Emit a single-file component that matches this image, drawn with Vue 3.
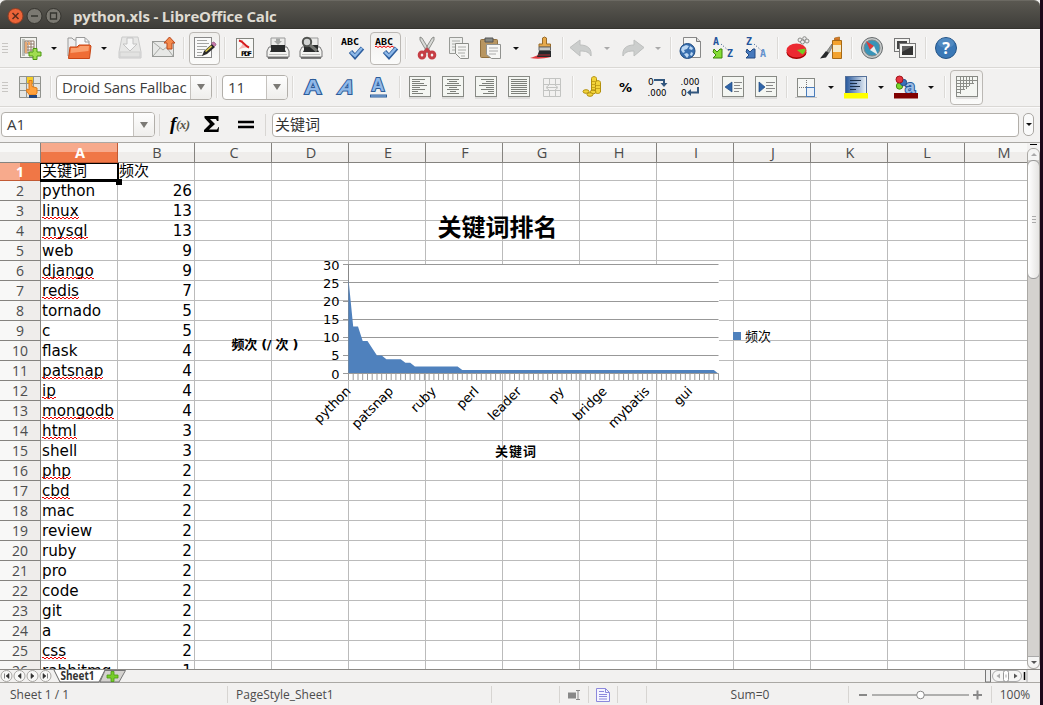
<script setup>
const sizes = { sep: 2, drop: 8, edit: 31, autospell: 31, gridview: 33, grip: 6, fontname: 156, fontsize: 66 }
const spread = (list) => {
  let right = 0
  return list.map(([name, centre]) => {
    const w = sizes[name] || 24
    const gap = centre - w / 2 - right
    right = centre + w / 2
    return { name, gap }
  })
}
const standard = spread([
  ['grip', 5], ['new', 30], ['drop', 54], ['open', 79], ['drop', 104], ['save', 130], ['mail', 164], ['sep', 184],
  ['edit', 204.5], ['sep', 225], ['pdf', 245], ['print', 278], ['preview', 311], ['sep', 332], ['spell', 352],
  ['autospell', 385.5], ['sep', 406], ['cut', 427], ['copy', 459], ['paste', 491], ['drop', 516], ['brush', 542],
  ['sep', 563], ['undo', 581], ['dropoff', 607], ['redo', 633], ['dropoff', 658], ['sep', 671], ['web', 690],
  ['sortaz', 724], ['sortza', 757], ['sep', 778], ['pie', 798], ['draw', 832], ['sep', 852], ['compass', 872],
  ['gallery', 905], ['sep', 926], ['help', 946]
])
const formatting = spread([
  ['grip', 5], ['styles', 30], ['sep', 51], ['fontname', 134], ['sep', 217], ['fontsize', 255], ['sep', 293],
  ['bold', 313], ['italic', 346], ['underline', 378], ['sep', 400], ['left', 420], ['center', 453], ['right', 486],
  ['justify', 519], ['merge', 552], ['sep', 573], ['coins', 593], ['percent', 625], ['decadd', 658], ['decdel', 691],
  ['sep', 713], ['outdent', 733], ['indent', 766], ['sep', 787], ['border', 806], ['drop', 831], ['hilite', 856],
  ['drop', 881], ['color', 906], ['drop', 931], ['sep', 945], ['gridview', 966.5]
])

const frame = '<rect x="1.500" y="1.500" width="21" height="20" fill="#f4f6f2" stroke="#888a85"/><path d="M1 23h22" stroke="#c9c9c7"/>'
const bars = (rows) => frame + `<g stroke="#7d807a" stroke-width="1">${rows.map(([a, b], i) => `<path d="M${a} ${4.5 + i * 2}H${b}"/>`).join('')}</g>`
const check = '<path d="M10.500 15.500l4.500 5 7.500-8.500" fill="none" stroke="#2d5e9e" stroke-width="4.600"/><path d="M10.800 16l4.200 3.800 7-7.800" fill="none" stroke="#8db8e8" stroke-width="2.400"/>'
const abc = '<text x="1" y="8.500" font-family="DejaVu Sans Mono" font-weight="bold" font-size="9" textLength="18" lengthAdjust="spacingAndGlyphs">ABC</text>'
const printer = '<path d="M5 2h14v10H5z" fill="#ececea" stroke="#999"/><path d="M3 11h18l2 4v6H1v-6z" fill="#f3f3f1" stroke="#777"/><path d="M5 9h14v5l1 2H4l1-2z" fill="#292b2b"/><path d="M3 18.500h18" stroke="#c1c1bf"/><path d="M2 22h20" stroke="#555" stroke-width="1.500"/>'
const letterA = (y, size, extra = '') => `<g ${extra}><text x="12" y="${y}" text-anchor="middle" font-family="Liberation Sans" font-weight="bold" font-size="${size}" fill="#8fb8e8" stroke="#2d5c98" stroke-width="2" paint-order="stroke">A</text></g>`
const arrowUndo = '<path d="M1 11.500L11 4v5c8 0 12 4 11 11-2-4-5-5-11-5v5z" fill="#cccecd" stroke="#bdbfbe"/>'
const smallArrow = (fill, edge) => `<path d="M2 13l3 3 3-3 2 0v9H1l3-3-3-3z" fill="${fill}" stroke="${edge}"/>`
const sorter = (a, b, shade, fill, edge) => `<g font-family="DejaVu Sans Mono" font-size="10" font-weight="bold"><text x="1" y="9" fill="#24549b">${a}</text><text x="15" y="21" fill="${shade}">${b}</text></g><path d="M9 8l8 7" stroke="#2e5286" stroke-dasharray="1 2"/>` + smallArrow(fill, edge)

const icons = {
  new: '<rect x="2.500" y="1.500" width="16" height="20" fill="#f3f3ef" stroke="#888a85"/><path d="M4 3h3v17H4z" fill="#bcbfb9"/><path d="M7 5h9v13H7z" fill="#fff"/><path d="M7 5h9M7 8h9M7 11h9M7 14h9M7 17h9M7 5v12M10 5v12M13 5v12M16 5v12" stroke="#8e7767" fill="none"/><path d="M7 6h2v11H7zM10 6h2v3h-2z" fill="#e8aa75"/><path d="M15 12.500h4v3.500h4v4h-4v3.500h-4V20h-4v-4h4z" fill="#a0dd50" stroke="#4b9810"/>',
  open: '<path d="M1 20V2h4l2 2h3v16z" fill="#eee" stroke="#999"/><path d="M9 12V1.500h9l4 4V12z" fill="#fafafa" stroke="#999"/><path d="M18 2v4h4" fill="none" stroke="#999"/><path d="M1.500 22.500L3 11h7l2-2h11l1 1-1.500 12.500z" fill="#ef6d35" stroke="#c84615"/><path d="M4 12h7l2-2h9l-.5 5L3.500 17z" fill="#ffb384" opacity=".7"/>',
  save: '<path d="M4 1h16l3 15v6H1v-6z" fill="#e7e7e6" stroke="#cacaca"/><path d="M2 16h20v5H2z" fill="#e2e2e1" stroke="#cfcfcf"/><path d="M9 2h6v6h4l-7 7-7-7h4z" fill="#f5f5f5" stroke="#c3c3c3"/>',
  mail: '<rect x=".5" y="5.500" width="21" height="15" fill="#e7e8e6" stroke="#989a97"/><path d="M1 6l10 8L21 6M1 20l7-8M21 20l-6-8" fill="none" stroke="#a7a9a5"/><path d="M15 13V7h-3l5.500-6L23 7h-3v6z" fill="#f48a4c" stroke="#b9461b"/>',
  edit: '<rect x="1.500" y="1.500" width="17" height="20" fill="#fafafa" stroke="#888"/><path d="M4 4.500h10M4 7.500h12M4 10.500h10M4 13.500h8M4 16.500h5M4 19.500h6" stroke="#a4a5a3"/><path d="M9 20l2-5 8-7 3 3-8 7z" fill="#292929"/><path d="M12 15l6-5.500 1.200 1.200-6.200 5.300z" fill="#dbc849"/><path d="M18.500 7.500l1.500-1.500h1l2 2v1l-1.500 1.500z" fill="#c678a8" stroke="#8c5478" stroke-width=".6"/>',
  pdf: '<rect x="3.500" y="2.500" width="17" height="19" fill="#f8f8f6" stroke="#83857f"/><path d="M5 4h5c0 4 3 6 8 8-5-1-10 0-13 2 4-4 5-6 4-9z" fill="#f3bab8"/><path d="M6 4.500c5 1 5 5 10 7" stroke="#d6191b" stroke-width="2" fill="none"/><text x="8" y="20" font-family="DejaVu Sans" font-weight="bold" font-size="6.500" textLength="11">PDF</text>',
  print: printer + '<path d="M10 2.500h4V5h2l-4 4-4-4h2z" fill="#a5a7a5"/>',
  preview: printer + '<circle cx="8" cy="6" r="4.200" fill="#d2d4d3" stroke="#50524f" stroke-width="2"/><path d="M11 9l7 6" stroke="#757773" stroke-width="3"/>',
  spell: abc + check,
  autospell: abc + '<path d="M1 11l1-1 2 1.500 2-1.500 2 1.500 2-1.500 2 1.500 2-1.500 2 1.500 2-1.500 2 1.500" fill="none" stroke="#e00"/>' + check,
  cut: '<path d="M5 1l2 1 8.500 14-3 1L5 4zM19 1l-2 1-8.500 14 3 1L19 4z" fill="#d8dad7" stroke="#777975" stroke-width=".8"/><g fill="none" stroke="#c63e45" stroke-width="3"><ellipse cx="7" cy="19" rx="2.800" ry="3"/><ellipse cx="17" cy="19" rx="2.800" ry="3"/><path d="M9 17l3-3.500 3 3.500"/></g>',
  copy: '<path d="M2.500 1.500h13v16h-13z" fill="#eeefed" stroke="#999b97"/><path d="M5 5h8M5 8h7M5 11h6M5 14h4" stroke="#aaaca8"/><path d="M8.500 7.500h13v15h-8l-5-5z" fill="#f5f5f3" stroke="#8b8d88"/><path d="M11 11h8M11 14h8M11 17h7M14 20h4" stroke="#aaaca8"/>',
  paste: '<rect x="1.500" y="3.500" width="17" height="18" rx="1" fill="#b89661" stroke="#90703f"/><path d="M6 2h8v4H6z" fill="#858985" stroke="#555"/><path d="M7.500 8.500h14v14h-9l-5-4z" fill="#f7f7f5" stroke="#91928f"/><path d="M10 12h9M10 15h9M10 18h7" stroke="#aaa"/>',
  brush: '<path d="M12.500 2q2-2 4 0v6h4v3H9V8h3.500z" fill="#e7aa4c" stroke="#996c2a"/><path d="M9 11h11.500v3.500H9z" fill="#c5c7c5" stroke="#666"/><path d="M0 22c4-1 5-2 9-3l12 2c-8 2-15 2-21 1z" fill="#e33b40"/><path d="M9 15h12v6H7z" fill="#26282b"/><path d="M8 19h12" stroke="#b82a30"/>',
  undo: arrowUndo,
  redo: `<g transform="matrix(-1 0 0 1 24 0)">${arrowUndo}</g>`,
  web: '<path d="M5.500 1.500h13l4 4v16h-17z" fill="#f6f6f4" stroke="#888"/><path d="M18.500 1.500v4h4" fill="#ddd" stroke="#777"/><circle cx="9.500" cy="15" r="7.500" fill="#386faf" stroke="#204c82"/><path d="M4 11l4-2 3 1-2 3-3 1 1 2-2 1-2-3zM12 10l3 2-1 2-3-1zM6 18l3-1 2 2-2 3zM13 16l2 1-1 3-2-1z" fill="#bdd8f3"/>',
  sortaz: sorter('A', 'Z', '#24549b', '#86dc35', '#3c850b'),
  sortza: sorter('Z', 'A', '#6492ce', '#4679bd', '#234b82'),
  pie: '<ellipse cx="10.500" cy="16.500" rx="10" ry="6.500" fill="#a40000"/><ellipse cx="10.500" cy="14.500" rx="10" ry="7" fill="#ec2931"/><path d="M11 14l8.500-1.500c0 3-1 4-3 6z" fill="#70cc20"/><g fill="#eee" stroke="#8a8b88"><circle cx="14" cy="4" r="2"/><circle cx="18.500" cy="2.500" r="1.800"/><circle cx="16.500" cy="6" r="2"/><circle cx="21" cy="5" r="2"/></g>',
  draw: '<path d="M12.500 4.500h9v18h-9z" fill="#f3a22d" stroke="#a56916"/><path d="M14.500 4V2l5-1v3z" fill="#dc7928" stroke="#a56916" stroke-width=".7"/><path d="M13 9h8v7h-8z" fill="#f5eac9"/><path d="M12 8l-5 7 2 2 3-6z" fill="#9a9d98" stroke="#666" stroke-width=".7"/><path d="M6 15l3 2-3 4.500-6 1z" fill="#252729"/>',
  compass: '<circle cx="12" cy="12" r="10.500" fill="#c7caca" stroke="#666b6d"/><circle cx="12" cy="12" r="8" fill="#3994b8" stroke="#7f898b"/><path d="M6 5l8 5-4 4z" fill="#e33938"/><path d="M18 19l-8-5 4-4z" fill="#e8eeee"/>',
  gallery: '<rect x="1.500" y="2.500" width="15" height="13" fill="#f2f2f0" stroke="#777"/><path d="M4 5h10v8H4z" fill="#444"/><rect x="6.500" y="7.500" width="16" height="14" fill="#f5f5f3" stroke="#777"/><path d="M9 10h11v9H9z" fill="#333"/><path d="M9 10h11L9 16z" fill="#606060"/>',
  help: '<circle cx="12" cy="12" r="10.500" fill="#3a78b6" stroke="#245486"/><ellipse cx="12" cy="7" rx="8" ry="5" fill="#74a5d2" opacity=".4"/><text x="12" y="18" text-anchor="middle" font-family="Noto Sans" font-size="16" font-weight="bold" fill="#fff">?</text>',
  styles: '<path d="M1.500 1.500h21v21h-21z" fill="#e4e5e3"/><path d="M8 2h7v6H8z" fill="#f5ce28"/><path d="M1.500 1.500h21v21h-21zM1 8.500h22M1 15.500h22M8.500 1v22M15.500 1v22" fill="none" stroke="#91938e"/><path d="M11 5.500h3v6l5 1.500v5l-1.500 2h-6l-3-4 .5-2 2 1z" fill="#ffa13d" stroke="#e07a14"/><path d="M11 20h8v3h-8z" fill="#23457d"/>',
  bold: letterA(19, 20, 'transform="matrix(1.2 0 0 1 -2.400 0)"'),
  italic: letterA(19, 20, 'transform="matrix(1.050 0 -.35 1 4.500 0)"'),
  underline: letterA(16, 18) + '<path d="M4 21h17" stroke="#2d5c98" stroke-width="3"/><path d="M5 21h15" stroke="#8fb8e8"/>',
  left: bars([[4, 17], [4, 12], [4, 16], [4, 19], [4, 12], [4, 17], [4, 10], [4, 15]]),
  center: bars([[6, 18], [8, 16], [6, 18], [4, 20], [8, 16], [6, 18], [9, 15], [6, 18]]),
  right: bars([[7, 20], [12, 20], [8, 20], [5, 20], [12, 20], [7, 20], [14, 20], [9, 20]]),
  justify: bars([[4, 20], [4, 20], [4, 20], [4, 20], [4, 20], [4, 20], [4, 20], [4, 20]]),
  merge: '<path d="M3.500 3.500h17v18h-17zM3 9.500h18M3 15.500h18M9.500 3v6M15.500 3v6M9.500 16v6M15.500 16v6M7 12.500h10M9 10l-3 2.500L9 15M15 10l3 2.500-3 2.500" fill="none" stroke="#c3c4c2"/>',
  coins: '<g fill="#f3d43a" stroke="#b3900d"><path d="M10.500 3.500c0-2.500 5-2.500 5 0V15h-5z"/><path d="M14.500 7.500c0-2.500 5-2.500 5 0V17c-1 2-5 2-5 0z"/><ellipse cx="5" cy="16.500" rx="3" ry="1.800"/><ellipse cx="12" cy="17" rx="3" ry="1.800"/><ellipse cx="9" cy="19.500" rx="3" ry="1.800"/></g><path d="M11 6.500h4M11 9.500h4M11 12.500h4M15 10.500h4M15 13.500h4" stroke="#c9a51a"/>',
  percent: '<text x="12.500" y="16.500" text-anchor="middle" font-family="DejaVu Sans" font-size="13" font-weight="bold">%</text>',
  decadd: '<g font-family="DejaVu Sans" font-size="9"><text x="2" y="9.500">0</text><text x="1.500" y="21" textLength="19" lengthAdjust="spacingAndGlyphs">.000</text></g><path d="M8 5h10v4.500" fill="none" stroke="#33577e" stroke-width="2"/><path d="M14.500 8h7L18 12z" fill="#33577e"/>',
  decdel: '<g font-family="DejaVu Sans" font-size="9"><text x="1.500" y="9.500" textLength="19" lengthAdjust="spacingAndGlyphs">.000</text><text x="2" y="21">0</text></g><path d="M19 12v5.500h-8" fill="none" stroke="#33577e" stroke-width="2"/><path d="M12 14v7l-4-3.500z" fill="#33577e"/>',
  outdent: frame + '<path d="M11 7v10l-7-5z" fill="#2f65a9" stroke="#1f4880" stroke-width=".7"/><path d="M13 7.500h8M13 10.500h6M13 13.500h8M13 16.500h5" stroke="#888"/>',
  indent: frame + '<path d="M5 7v10l6-5z" fill="#2f65a9" stroke="#1f4880" stroke-width=".7"/><path d="M12 7.500h9M12 10.500h7M12 13.500h9M12 16.500h6" stroke="#888"/>',
  border: '<rect x="3.500" y="3.500" width="17" height="18" fill="#f6f7f5" stroke="#888a85"/><path d="M5 12.500h14M12.500 5v14" stroke="#777" stroke-dasharray="1 1"/><rect x="12.500" y="12.500" width="8" height="9" fill="#eaf1fa" stroke="#4b7dbb"/><path d="M1 22.500h22" stroke="#c5c5c5"/>',
  hilite: '<defs><linearGradient id="hl"><stop stop-color="#25569b"/><stop offset="1" stop-color="#edf3f8"/></linearGradient></defs><rect x="1.500" y="1.500" width="21" height="18" fill="url(#hl)" stroke="#567199"/><path d="M6 5.500h11M6 8.500h7M6 11.500h10M6 14.500h6" stroke="#182d45"/><path d="M0 18h24v5.500H0z" fill="#ff0"/>',
  color: '<text x="11" y="17.500" font-family="Liberation Sans" font-weight="bold" font-size="18" fill="#9bbce4" stroke="#285a9e" stroke-width="2" paint-order="stroke">a</text><circle cx="5.500" cy="11" r="3.200" fill="#7bd62b" stroke="#438a12"/><circle cx="9.500" cy="7.500" r="3.200" fill="#3971bb" stroke="#234e87"/><circle cx="5.500" cy="4.500" r="3.500" fill="#e53440" stroke="#a31219"/><path d="M0 18h24v5.500H0z" fill="#800000"/>',
  gridview: frame + '<path d="M2 5.500h20M2 8.500h17M2 11.500h12M2 14.500h8M2 17.500h4M5.500 2v17M8.500 2v13M11.500 2v12M14.500 2v9M17.500 2v6" stroke="#8b8d88"/>'
}

const letters = 'ABCDEFGHIJKLM'.split('')
const data = [['关键词', '频次'], ['python', 26], ['linux', 13, 1], ['mysql', 13, 1], ['web', 9], ['django', 9, 1], ['redis', 7, 1], ['tornado', 5], ['c', 5], ['flask', 4], ['patsnap', 4, 1], ['ip', 4, 1], ['mongodb', 4, 1], ['html', 3, 1], ['shell', 3], ['php', 2, 1], ['cbd', 2, 1], ['mac', 2], ['review', 2], ['ruby', 2], ['pro', 2], ['code', 2], ['git', 2], ['a', 2], ['css', 2, 1], ['rabbitmq', 1]]

const values = [26, 13, 13, 9, 9, 7, 5, 5, 4, 4, 4, 4, 3, 3, ...Array(10).fill(2), ...Array(54).fill(1), 0]
const px = (i) => 348.5 + i * 370 / 78
const py = (v) => 373.7 - v * 3.63
const area = `M348.500 373.700 ${values.map((v, i) => `L${px(i).toFixed(1)} ${py(v).toFixed(1)}`).join(' ')}Z`
const ticks = values.map((_, i) => `M${px(i).toFixed(1)} 374v6`).join('')
const levels = [0, 5, 10, 15, 20, 25, 30]
const names = ['python', 'patsnap', 'ruby', 'perl', 'leader', 'py', 'bridge', 'mybatis', 'gui']
const nav = ['M4.500 4v5M9 4L6 6.500 9 9z', 'M8 4L5 6.500 8 9z', 'M5 4l3 2.500L5 9z', 'M8.500 4v5M4 4l3 2.500L4 9z']
</script>

<template>
  <div class="desktop">
    <div class="window">
      <header class="title">
        <svg width="66" height="29" viewBox="0 0 66 29">
          <circle cx="15.500" cy="15" r="7.500" fill="#ec6438" stroke="#8d3d23" />
          <path d="M12.500 12l6 6m0-6l-6 6" stroke="#5b2c1c" stroke-width="1.500" />
          <g fill="#7b7972" stroke="#35342f"><circle cx="34.500" cy="15" r="7.500" /><circle cx="53.500" cy="15" r="7.500" /></g>
          <path d="M31 15h7M50.500 12h6v6h-6z" fill="none" stroke="#35342f" stroke-width="1.300" />
        </svg>
        <span>python.xls - LibreOffice Calc</span>
      </header>

      <div v-for="(bar, b) in [standard, formatting]" :key="b" class="toolbar">
        <div v-for="(it, i) in bar" :key="i" class="item" :class="it.name" :style="{ marginLeft: it.gap + 'px' }">
          <template v-if="it.name === 'fontname' || it.name === 'fontsize'">
            <span class="value">{{ it.name === 'fontname' ? 'Droid Sans Fallbac' : '11' }}</span><span class="pick"><i /></span>
          </template>
          <svg v-else-if="icons[it.name]" width="24" height="24" viewBox="0 0 24 24" v-html="icons[it.name]" />
          <i v-else-if="it.name.startsWith('drop')" class="arrow" />
        </div>
      </div>

      <div class="formula">
        <div class="combo namebox"><span class="value">A1</span><span class="pick"><i /></span></div>
        <div class="line" />
        <svg class="fx" width="90" height="24" viewBox="0 0 90 24">
          <text x="2" y="16.500" font-family="Liberation Serif" font-style="italic" font-weight="bold" font-size="19">f</text>
          <text x="8" y="16" font-family="Liberation Serif" font-style="italic" font-weight="bold" font-size="13" fill="#555448" textLength="14">(x)</text>
          <path d="M36.500 3h14v5H49l-1-2h-6l5 5-6 5.500h8l1.500-2.500H51l-.5 5H36v-2l6-6-5.500-6z" />
          <path d="M70 9h16M70 14h16" stroke="#000" stroke-width="2.400" />
        </svg>
        <div class="line" />
        <div class="input">关键词</div>
        <div class="expand"><i class="arrow" /></div>
      </div>

      <div class="sheet">
        <div class="grid">
          <div class="row head">
            <div class="num" />
            <div v-for="l in letters" :key="l" class="col" :class="{ on: l === 'A' }">{{ l }}</div>
          </div>
          <div v-for="(r, i) in data" :key="i" class="row" :class="{ first: !i }">
            <div class="num" :class="{ on: !i }"><span>{{ i + 1 }}</span></div>
            <div class="cell"><span :class="{ wavy: r[2] }">{{ r[0] }}</span></div>
            <div class="cell" :class="{ amount: i }"><span>{{ r[1] }}</span></div>
            <div v-for="n in 11" :key="n" class="cell" />
          </div>
          <div class="cursor" />
          <svg class="chart" width="1027" height="526" viewBox="0 143 1027 526">
            <rect x="348" y="265" width="371" height="109" fill="#fff" />
            <g v-for="v in levels" :key="v">
              <path :d="`M343 ${Math.floor(py(v)) + .5}H718.500`" stroke="#989898" />
              <text x="339.500" :y="py(v) + 4.800" text-anchor="end">{{ v }}</text>
            </g>
            <path d="M348.500 264.500v110" stroke="#888" />
            <path :d="area" fill="#4f81bd" />
            <path :d="ticks" stroke="#999" />
            <path d="M343 373.500H718.500" stroke="#999" />
            <text v-for="(n, i) in names" :key="n" text-anchor="end" :transform="`translate(${351.500 + i * 42.700} 392) rotate(-45)`">{{ n }}</text>
            <text class="b" x="437.500" y="235.500" font-size="24" textLength="120">关键词排名</text>
            <text class="b" x="231.500" y="348.500" textLength="67">频次 (/ 次 )</text>
            <text class="b" x="495" y="455.500" textLength="41">关键词</text>
            <rect x="733" y="332" width="8" height="8" fill="#4f81bd" />
            <text x="745" y="341" textLength="26">频次</text>
          </svg>
        </div>
        <div class="scroll">
          <div class="split" />
          <div class="track">
            <div class="up"><i /></div>
            <div class="thumb"><i /><i /><i /></div>
            <div class="down"><i /></div>
          </div>
        </div>
      </div>

      <div class="tabs">
        <svg v-for="(d, i) in nav" :key="i" width="13" height="13" viewBox="0 0 13 13">
          <circle cx="6.500" cy="6" r="5.500" fill="#f8f8f7" stroke="#aaa8a5" /><path :d="d" transform="translate(0 -.5)" fill="#333" stroke="#333" stroke-width=".6" />
        </svg>
        <svg class="tabshape" width="76" height="13" viewBox="0 0 76 13">
          <path d="M1 0l6 12h39l6-12z" fill="#fff" /><path d="M1 0l6 12h39L52 0" fill="none" stroke="#666" />
          <path d="M52 .5L47 12h19L72.500.5z" fill="#d4d2cf" stroke="#777" />
          <text x="7.500" y="9.500" font-family="Open Sans, sans-serif" font-size="12" font-weight="bold" fill="#333" textLength="34" lengthAdjust="spacingAndGlyphs">Sheet1</text>
          <path d="M58 1.500h3V5h4v3h-4v3.500h-3V8h-4V5h4z" fill="#77cd29" stroke="#4a9d10" stroke-width=".8" />
        </svg>
        <svg class="hscroll" width="43" height="13" viewBox="0 0 43 13">
          <path d="M.5 0v12h5V0" fill="#eee" stroke="#777" /><rect x="7.500" y=".5" width="29" height="11" rx="5.500" fill="#f6f6f5" stroke="#aaa" />
          <path d="M15 3.500v5L11.500 6z" fill="#aaa" /><rect x="18.500" y=".5" width="5" height="11" rx="2" fill="#fff" stroke="#999" /><path d="M21 4.500v3" stroke="#aaa" />
          <path d="M29 3.500v5L32.500 6z" fill="#555" /><path d="M39.500 2v8" stroke="#000" stroke-width="1.500" /><path d="M42 0v12" stroke="#aaa" />
        </svg>
      </div>

      <footer class="status">
        <div class="s1">Sheet 1 / 1</div><div class="s2">PageStyle_Sheet1</div><div class="s3" />
        <div class="s4"><svg width="14" height="14" viewBox="0 0 14 14"><path d="M0 4.500h8v6H0z" fill="#888" /><path d="M8 2.500h4M8 11.500h4M10 2.500v9" stroke="#888" /></svg></div>
        <div class="s5"><svg width="15" height="15" viewBox="0 0 15 15"><path d="M.5.5h9l4 4v9H.5z" fill="#f5f5ff" stroke="#8c88dc" /><path d="M9.500.5v4h4M3 3.500h5M3 6.500h8M3 8.500h8M3 11h8" fill="none" stroke="#8c88dc" /></svg></div>
        <div class="s6" /><div class="s7">Sum=0</div>
        <div class="s8"><svg width="124" height="14" viewBox="0 0 124 14"><path d="M0 7h8M114 7h9M118.500 2.500v9" stroke="#888" stroke-width="2" /><path d="M13 7h97" stroke="#999" stroke-width="1.500" /><circle cx="61.500" cy="7" r="3.800" fill="#fff" stroke="#888" /></svg></div>
        <div class="s9">100%</div>
      </footer>
    </div>
  </div>
</template>

<style>
html, body { margin: 0; overflow: hidden; }
</style>

<style scoped>
* { box-sizing: border-box; }
svg { overflow: visible; }
.desktop { width: 1043px; height: 705px; background: #1c0719; overflow: hidden; }
.window { width: 1040px; height: 705px; background: #f2f1f0; display: flex; flex-direction: column; font-family: "Open Sans", "Noto Sans CJK SC", sans-serif; color: #4c4c4c; }
.title { height: 29px; flex: none; display: flex; align-items: center; background: linear-gradient(#5a5851, #3e3d39); border-top: 1px solid #6b6962; border-bottom: 1px solid #35342f; border-radius: 6px 6px 0 0; }
.title svg { margin-top: 1px; }
.title span { margin-left: 7px; margin-top: 2px; color: #dfdbd2; font-size: 15px; font-weight: bold; letter-spacing: -.18px; white-space: nowrap; }
.toolbar { height: 39px; flex: none; display: flex; align-items: center; border-bottom: 1px solid #dad8d5; box-shadow: inset 0 1px #faf9f9; }
.item { width: 24px; height: 24px; flex: none; display: flex; align-items: center; justify-content: center; }
.item svg { flex: none; }
.item.sep { width: 2px; height: 22px; background: #dcdad7; border-right: 1px solid #fafafa; }
.item.drop { width: 8px; }
.item.grip { width: 6px; height: 10px; background: repeating-linear-gradient(#c8c6c3 0 1px, transparent 1px 3px); }
.item.edit, .item.autospell, .item.gridview { width: 31px; height: 33px; border: 1px solid #bbb8b4; border-radius: 4px; background: linear-gradient(#f0efed, #fbfbfa); }
.item.gridview { width: 33px; height: 35px; }
.arrow { border: 3px solid transparent; border-top: 3px solid #111; border-bottom: 0; }
.dropoff .arrow { border-top-color: #aaa; }
.combo, .item.fontname, .item.fontsize { display: flex; align-items: stretch; border: 1px solid #b2afaa; border-radius: 4px; background: #fff; height: 25px; color: #3c3c3c; overflow: hidden; justify-content: flex-start; }
.item.fontname { width: 156px; }
.item.fontsize { width: 66px; }
.value { flex: 1; font-size: 15px; line-height: 23px; padding-left: 5px; white-space: nowrap; overflow: hidden; }
.fontname .value { letter-spacing: -.2px; }
.pick { width: 21px; flex: none; border-left: 1px solid #c5c2be; background: linear-gradient(#fdfdfd, #efeeec); display: flex; align-items: center; justify-content: center; }
.pick i { border: 4px solid transparent; border-top: 6px solid #7b7975; border-bottom: 0; }
.formula { height: 35px; flex: none; display: flex; align-items: center; padding-left: 1px; box-shadow: inset 0 1px #faf9f9; }
.namebox { width: 154px; }
.line { width: 1px; height: 22px; background: #d8d6d3; margin-left: 4px; }
.fx { margin: 0 7px 0 8px; }
.fx + .line { margin: 0; }
.input { width: 747px; height: 24px; margin-left: 6px; border: 1px solid #b2afaa; border-radius: 4px; background: #fff; padding-left: 2px; font-size: 15px; line-height: 21px; color: #333; }
.expand { width: 11px; height: 23px; margin-left: 4px; border: 1px solid #aaa7a3; border-radius: 5px; background: #fafafa; display: flex; align-items: center; justify-content: center; }
.sheet { height: 528px; flex: none; display: flex; border-bottom: 1px solid #8b8985; border-top: 1px solid #aaa8a4; }
.grid { position: relative; width: 1027px; overflow: hidden; background: #fff; }
.row { display: flex; height: 20px; width: 1042px; }
.row.first { height: 18px; }
.num { width: 41px; flex: none; border-right: 1px solid #85837f; border-bottom: 1px solid #85837f; background: linear-gradient(90deg, #f8f8f7 50%, #efedeb 50%); font-size: 14px; line-height: 19px; text-align: center; }
.num.on { background: linear-gradient(90deg, #f7aa8c 50%, #f07746 50%); color: #fff; font-weight: bold; border-color: #c25a34; }
.first .num { line-height: 18px; }
.head .num { background: linear-gradient(#f8f8f7 50%, #efedeb 50%); }
.col { width: 77px; flex: none; padding-left: 2px; border-right: 1px solid #85837f; border-bottom: 1px solid #85837f; background: linear-gradient(#f8f8f7 50%, #efedeb 50%); text-align: center; font-size: 14.500px; line-height: 20px; }
.col.on { background: linear-gradient(#f7aa8c 50%, #f07746 50%); color: #fff; font-weight: bold; border-color: #c25a34; }
.cell { width: 77px; flex: none; border-right: 1px solid #bbb; border-bottom: 1px solid #bbb; padding: 0 1px; color: #000; font: 15.200px/21px "DejaVu Sans", "Noto Sans CJK SC", sans-serif; white-space: nowrap; overflow: hidden; }
.first .cell { font-size: 15px; line-height: 16px; overflow: visible; }
.cell.amount { text-align: right; padding-right: 2px; }
.wavy { position: relative; display: inline-block; height: 19px; }
.wavy::after { content: ""; position: absolute; left: 0; right: 0; top: 16px; height: 2px; background: repeating-linear-gradient(90deg, #e00 0 2px, transparent 2px 4px) 0 0 / 100% 1px no-repeat, repeating-linear-gradient(90deg, transparent 0 2px, #e00 2px 4px) 0 1px / 100% 1px no-repeat; }
.cursor { position: absolute; left: 40px; top: 20px; width: 79px; height: 19px; border: 2px solid #000; border-top-width: 1px; border-left-width: 1px; border-bottom-width: 3px; }
.cursor::after { content: ""; position: absolute; right: -5px; bottom: -6px; width: 6px; height: 6px; background: #000; }
.chart { position: absolute; left: 0; top: 0; font-family: "DejaVu Sans", "Noto Sans CJK SC", sans-serif; font-size: 13px; }
.b { font-weight: bold; }
.scroll { width: 13px; display: flex; flex-direction: column; }
.split { height: 4px; margin: 1px 3px 0; border-top: 1px solid #000; flex: none; }
.track { flex: 1; background: #d4d2cf; border: 1px solid #aaa8a4; border-radius: 6px; display: flex; flex-direction: column; overflow: hidden; }
.up, .down { height: 11px; background: #f5f5f4; display: flex; align-items: center; justify-content: center; flex: none; }
.up i { border: 3px solid transparent; border-bottom-color: #aaa; border-top: 0; }
.down { height: 12px; margin-top: auto; border-top: 1px solid #aaa; border-radius: 0 0 6px 6px; }
.down i { border: 3px solid transparent; border-top-color: #555; border-bottom: 0; }
.thumb { height: 119px; flex: none; margin: 0 -1px; border: 1px solid #999; border-radius: 6px; background: linear-gradient(90deg, #fff, #e5e4e2); display: flex; flex-direction: column; align-items: center; justify-content: center; gap: 2px; }
.thumb i { width: 4px; height: 1px; background: #aaa; }
.tabs { height: 13px; flex: none; display: flex; border-bottom: 1px solid #aaa8a4; }
.tabs svg { flex: none; }
.tabshape { margin-left: 1px; }
.hscroll { margin-left: auto; margin-right: 12px; }
.status { flex: 1; display: flex; font-size: 12px; line-height: 22px; padding-top: 1px; }
.status div { display: flex; align-items: center; justify-content: center; position: relative; white-space: nowrap; }
.status div:not(:last-child)::after { content: ""; position: absolute; right: 0; top: 2px; width: 1px; height: 17px; background: #d7d5d2; }
.status .s1 { width: 228px; justify-content: flex-start; padding-left: 10px; }
.status .s2 { width: 264px; justify-content: flex-start; padding-left: 8px; }
.s3 { width: 68px; }
.s4 { width: 29px; }
.s5 { width: 29px; }
.s6 { width: 29px; }
.status .s7 { width: 202px; padding-left: 4px; }
.status .s8 { width: 143px; }
.s9 { width: 46px; }
</style>
